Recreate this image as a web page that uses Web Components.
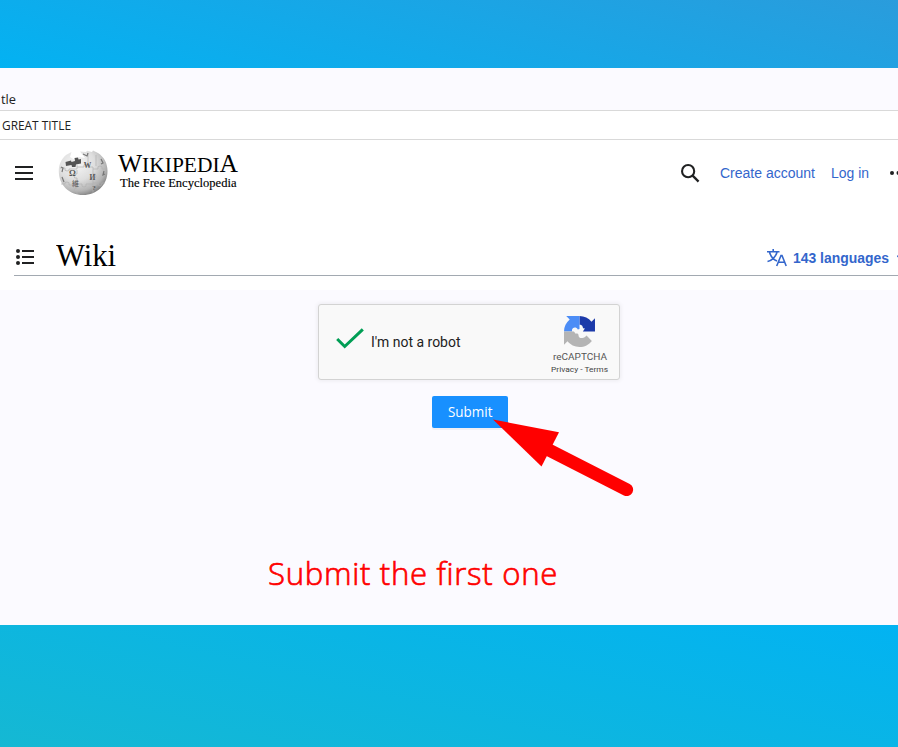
<!DOCTYPE html>
<html lang="en"><head><meta charset="utf-8"><title>Wiki</title>
<style>body{margin:0;overflow:hidden}</style></head><body>
<demo-page></demo-page>
<script>
const make=(name,html,init)=>customElements.define(name,class extends HTMLElement{
  constructor(){super();this.attachShadow({mode:'open'}).innerHTML=html}
  connectedCallback(){if(init)init.call(this)}
});

/* A line of text scaled horizontally to the width in its "w" attribute. */
make('fit-text',`<style>:host{display:block;white-space:nowrap;flex:none}span{display:inline-block;transform-origin:0 50%}</style><span><slot></slot></span>`,function(){
  const w=+this.getAttribute('w'),s=this.shadowRoot.querySelector('span');
  const n=s.getBoundingClientRect().width;
  this.style.width=w+'px';
  if(n)s.style.transform=`scaleX(${w/n})`;
});

make('wiki-globe',`<style>:host{display:block;width:50px;height:46px;flex:none}svg{display:block}</style>
<svg width="50" height="46" viewBox="0 0 50 46">
<defs><radialGradient id="g" cx=".36" cy=".3" r=".75"><stop offset="0" stop-color="#f6f6f6"/><stop offset=".5" stop-color="#dedede"/><stop offset=".82" stop-color="#b4b4b4"/><stop offset="1" stop-color="#7d7d7d"/></radialGradient></defs>
<path d="M8 5 L13.5 2 L12 7 L17 10 L21 7 L27 8 L22 1.5 L28 2 L29 0.8 L34 2 L35 .5 L40 3 C46 7 49.500 13 49.500 21 C49.500 35 39 45 25 45 C11 45 .8 35 .8 21 C.8 14 3.500 9 8 5Z" fill="url(#g)"/>
<path d="M7.500 12 L13 10.500 L13.500 12 L17 11 L16.500 8 L20 7.500 L20.500 9.500 L23 9 L23 13.500 L18 14.500 L17.500 17 L14 17 L13.500 15 L8 16Z" fill="#555"/>
<g fill="none" stroke="#b2b2b2" stroke-width=".7"><path d="M2 18h5q-1 3 2 3t2-2h8v-4m0 5v4q-3-1-3 2t3 2v7h-8q1-3-2-3t-2 2H3m16 0h5q-1 3 2 3t2-3h7v9m0-9v-6q3 1 3-2t-3-2v-7h-5q1-3-2-3t-2 3h-7M35 19h5q-1-3 2-3t2 3h5M35 33h5q0 3 2 3t2-3h3M30 12V3m8 13V5M19 33v5q-3 0-3 2t3 2v2"/></g>
<g fill="#555" font-family="Liberation Serif,serif" font-weight="bold" text-anchor="middle"><text x="14.500" y="25.500" font-size="8.500">Ω</text><text x="29.500" y="18" font-size="7.500">W</text><text x="34.500" y="29.500" font-size="7.500">И</text><text x="17.500" y="36" font-size="7" font-weight="normal" font-family="Noto Sans CJK JP,sans-serif">維</text><text x="36" y="40" font-size="7">?</text></g>
<g stroke="#777" stroke-width="1.200" fill="none"><path d="M3 17l2 1-1 4M4 27l2 5M25 4l4 2 1-3M43 9l2 4-2 1M46 21l-1 4 2-1"/></g>
</svg>`);

make('wiki-wordmark',`<style>:host{display:block;width:127px;height:46px;flex:none}svg{display:block;overflow:visible}</style>
<svg width="127" height="46" font-family="Liberation Serif,serif">
<text x="2" y="22.300" font-size="25" textLength="120" lengthAdjust="spacingAndGlyphs">W<tspan font-size="21">IKIPEDI</tspan>A</text>
<text x="4" y="37.200" font-size="13" textLength="116.500" lengthAdjust="spacingAndGlyphs" stroke="#000" stroke-width=".15">The Free Encyclopedia</text>
</svg>`);

make('wiki-header',`<style>
:host{display:flex;height:66px;box-sizing:border-box;align-items:center;padding-left:15px;font:14px "Liberation Sans",sans-serif;color:#36c}
svg{display:block;flex:none}wiki-globe{margin-left:25px}wiki-wordmark{margin:0 0 0 8px}
.search{margin-left:438px}.a{margin-left:20px}.b{margin-left:16px}.dots{margin-left:20px}
</style>
<svg width="18" height="14" viewBox="0 0 18 14"><path d="M0 1h18M0 7h18M0 13h18" stroke="#202122" stroke-width="2"/></svg>
<wiki-globe></wiki-globe><wiki-wordmark></wiki-wordmark>
<svg class="search" width="19" height="19" viewBox="0 0 20 20"><circle cx="7.500" cy="7.500" r="6.400" fill="none" stroke="#202122" stroke-width="2.200"/><path d="M12 12l6.500 6.500" stroke="#202122" stroke-width="2.400"/></svg>
<fit-text class="a" w="95">Create account</fit-text><fit-text class="b" w="38">Log in</fit-text>
<svg class="dots" width="9" height="6"><circle cx="3" cy="3" r="2" fill="#202122"/><circle cx="9.500" cy="3" r="2" fill="#202122"/></svg>`);

make('wiki-titlebar',`<style>
:host{display:flex;height:40px;margin:30px 0 14px 14px;border-bottom:1px solid #a2a9b1;box-sizing:border-box;align-items:center}
svg{display:block;flex:none}h1{margin:-2px 0 0 22px;font:32px/38px "Liberation Serif",serif;color:#000}
.lang{display:flex;align-items:center;margin-left:651px;gap:6px;font:bold 14px "Liberation Sans",sans-serif;color:#36c;padding-top:4px}
</style>
<svg style="margin:3px 0 0 2px" width="18" height="16" viewBox="0 0 18 16"><g fill="#202122"><circle cx="2" cy="2" r="2"/><circle cx="2" cy="8" r="2"/><circle cx="2" cy="14" r="2"/><path d="M6 1h12v2H6zM6 7h12v2H6zM6 13h12v2H6z"/></g></svg>
<h1><fit-text w="60">Wiki</fit-text></h1>
<div class="lang"><svg width="20" height="18" viewBox="0 0 20 18" fill="none" stroke="#36c" stroke-width="1.600"><path d="M0 2.800h12.500M6.200 0v3M2.500 3c1 4 4 7.500 7.500 9M10 3C9 7.500 5 11.500.5 12.500M9.700 17L14 6.500h1L19.200 17M11.300 13.300h6.400"/></svg><fit-text w="96">143 languages</fit-text><svg width="5" height="6" style="margin-left:2px"><path d="M0 .5l4 4" stroke="#36c" stroke-width="1.400"/></svg></div>`);

make('captcha-box',`<style>
:host{display:flex;box-sizing:border-box;width:302px;height:76px;border:1px solid #d3d3d3;border-radius:3px;background:#f9f9f9;box-shadow:0 0 4px 1px rgba(0,0,0,.06);font-family:Roboto,sans-serif;color:#222;align-items:center}
.tick{display:block;margin:-7px 0 0 17px;flex:none}.label{font-size:14px;margin-left:7px}
.brand{margin:7px 0 0 auto;padding-right:10px;display:flex;flex-direction:column;align-items:center;color:#555;width:58px}
.brand svg{display:block;margin-right:1px}.name{font-size:9.500px;line-height:12px;margin-top:4px}.terms{font-size:8px;line-height:11px;margin:1px 1px 0 0;color:#444}
</style>
<svg class="tick" width="28" height="21" viewBox="0 0 28 21"><path d="M1.200 11l7.500 7.500L26.800 1.300" fill="none" stroke="#009e55" stroke-width="3"/></svg>
<fit-text class="label" w="89.500">I'm not a robot</fit-text>
<div class="brand"><svg width="31" height="31" viewBox="0 0 64 64">
<path d="M64 31.950c0-.460-.011-.917-.032-1.373V4.600l-7.180 7.180C50.911 4.590 41.979 0 31.973 0v18c3 0 6 1 6.500 4 .5 3 2 4 5 3.500l-4.500 6.450z" fill="#1c3aa9"/>
<path d="M31.973 0c-.460 0-1.028.011-1.481.032H4.600l7.180 7.180C4.590 13.090 0 22.020 0 32h17c-1.500-4 0-8 5-8.500 3 0 5 1 6.500 4.500l3.473-1z" fill="#4c8df6"/>
<path d="M0 32c0 .460.011.917.032 1.373V59.400l7.180-7.180C13.090 59.410 22.020 64 32.030 64c10.400 0 19.650-4.940 25.520-12.600L46.500 40.500c-3 4-6 5.500-10 5-4 0-6-2-6.500-5.500 0-3-2-4-6-3.500L20.500 32z" fill="#b4b4b4"/></svg>
<fit-text class="name" w="54">reCAPTCHA</fit-text><fit-text class="terms" w="57">Privacy - Terms</fit-text></div>`);

make('submit-button',`<style>:host{display:flex;width:76px;height:32px;box-sizing:border-box;margin:16px 0 0 2px;padding-bottom:1px;background:#1890ff;border-radius:2px;color:#fff;font:14px "Open Sans",sans-serif;align-items:center;justify-content:center;box-shadow:0 2px 0 rgba(0,0,0,.04)}</style><fit-text w="44.500"><slot></slot></fit-text>`);

make('demo-page',`<style>
:host{display:flex;flex-direction:column;width:898px;height:747px;position:relative;font-family:"Open Sans",sans-serif;color:#222;overflow:hidden}
.top{height:68px;background:linear-gradient(15deg,#03b2f2 0%,#2a9cdc 100%)}
.bottom{height:122px;background:linear-gradient(13deg,#15b8d3 0%,#02b3f2 100%)}
main{height:557px;background:#fbfaff;display:flex;flex-direction:column}
.tab{height:42px;box-sizing:border-box;padding:22px 0 0 1px;font-size:13px;line-height:19px}
.title{height:30px;box-sizing:border-box;border:solid #d9d9d9;border-width:1px 0;background:#fff;font-size:12px;line-height:29px;padding-left:2px}
.wiki{background:#fff;height:150px;overflow:hidden}
.form{display:flex;flex-direction:column;align-items:center;padding:14px 0 0 40px}
.caption{font:300 32px/44px "Open Sans",sans-serif;letter-spacing:.7px;-webkit-text-stroke:.7px #f00;color:#f00;margin:123px 0 0 268px}
.arrow{position:absolute;left:490px;top:416px}
</style>
<div class="top"></div>
<main><div class="tab"><fit-text w="15">tle</fit-text></div><div class="title"><fit-text w="69">GREAT TITLE</fit-text></div>
<div class="wiki"><wiki-header></wiki-header><wiki-titlebar></wiki-titlebar></div>
<div class="form"><captcha-box></captcha-box><submit-button>Submit</submit-button></div>
<fit-text class="caption" w="290">Submit the first one</fit-text></main>
<div class="bottom"></div>
<svg class="arrow" width="146" height="84"><path d="M3 3.500L69 16.200 51.500 50.500Z" fill="red"/><path d="M55 32L136.800 73.700" stroke="red" stroke-width="12.800" stroke-linecap="round"/></svg>`);
</script></body></html>
